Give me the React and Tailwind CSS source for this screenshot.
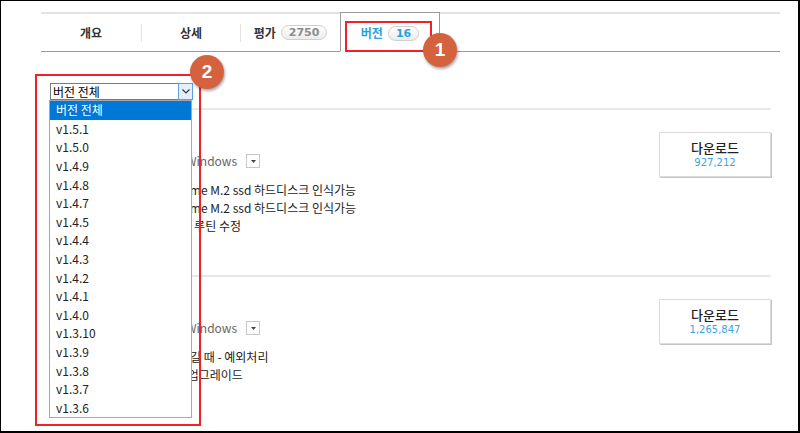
import React from 'react';

const versions = [
  'v1.5.1', 'v1.5.0', 'v1.4.9', 'v1.4.8', 'v1.4.7', 'v1.4.5', 'v1.4.4', 'v1.4.3',
  'v1.4.2', 'v1.4.1', 'v1.4.0', 'v1.3.10', 'v1.3.9', 'v1.3.8', 'v1.3.7', 'v1.3.6',
];

const releases = [
  {
    version: 'v1.5.1',
    downloads: '927,212',
    notes: [
      '· 부팅시 nvme M.2 ssd 하드디스크 인식가능',
      '· 설치시 nvme M.2 ssd 하드디스크 인식가능',
      '· 업데이트 - 루틴 수정',
    ],
  },
  {
    version: 'v1.5.0',
    downloads: '1,265,847',
    notes: ['· 폴더 경로 길 때 - 예외처리', '· zlib 엔진 업그레이드'],
  },
];

function Badge({ children, active }) {
  return (
    <span
      className={`ml-[5px] inline-flex h-[15px] items-center rounded-full border border-[#cfcfcf] bg-gradient-to-b from-white to-[#ececec] px-[7px] font-['DejaVu_Sans',sans-serif] text-[11px] font-bold leading-none ${
        active ? 'text-[#2a9fe0]' : 'text-[#8c8c8c]'
      }`}
    >
      {children}
    </span>
  );
}

function Tabs() {
  return (
    <div className="flex h-[40px] border-t-2 border-b border-t-[#e3e3e3] border-b-[#9a9a9a]">
      <div className="flex w-[100px] items-center justify-center text-[12px] font-bold text-[#333]">개요</div>
      <div className="w-px self-center h-[18px] bg-[#e2e2e2]" />
      <div className="flex w-[98px] items-center justify-center text-[12px] font-bold text-[#333]">상세</div>
      <div className="w-px self-center h-[18px] bg-[#e2e2e2]" />
      <div className="flex w-[99px] items-center justify-center text-[12px] font-bold text-[#333]">
        평가<Badge>2750</Badge>
      </div>
      <div className="-mt-[2px] -mb-px flex w-[100px] items-center justify-center border border-[#9a9a9a] border-b-white bg-white pt-[2px] text-[12px] font-bold text-[#2a9fe0]">
        버전<Badge active>16</Badge>
      </div>
      <div className="flex-1" />
    </div>
  );
}

function VersionSelect() {
  return (
    <div className="relative z-10 mt-[31px] w-[143px]">
      <div className="flex h-[17px] items-center border border-[#7a7a7a] bg-white">
        <span className="flex-1 pl-[2px] text-[12px] leading-none text-black">버전 전체</span>
        <span className="-my-px -mr-px flex h-[17px] w-[15px] items-center justify-center border border-[#5b9fe0] bg-[#e3effb]">
          <svg width="8" height="5" viewBox="0 0 8 5">
            <path d="M0.5 0.5 L4 4 L7.5 0.5" fill="none" stroke="#333" strokeWidth="1.1" />
          </svg>
        </span>
      </div>
      <ul className="absolute left-[-1px] top-full w-[143px] border border-[#a8a8a8] bg-white text-[12px]">
        <li className="flex h-[18.6px] items-center bg-[#0078d7] pl-[6px] text-white">버전 전체</li>
        {versions.map((v) => (
          <li key={v} className="flex h-[18.6px] items-center pl-[6px] text-[#222]">
            {v}
          </li>
        ))}
      </ul>
    </div>
  );
}

function Release({ release }) {
  return (
    <div className="flex h-[167px] justify-between border-t-2 border-[#e8e8e8]">
      <div className="pl-[81px] pt-[14px] text-[12px]">
        <div className="h-[20px] text-[14px] font-bold leading-[20px] text-[#222]">{release.version}</div>
        <div className="mt-[9px] flex h-[16px] items-center">
          <span className="w-[55px] text-[#888]">운영체제</span>
          <span className="text-[#666]">Windows</span>
          <span className="ml-[9px] flex h-[14px] w-[14px] items-center justify-center border border-[#c8c8c8] bg-white">
            <svg width="5" height="3" viewBox="0 0 5 3">
              <path d="M0 0 H5 L2.5 3 Z" fill="#444" />
            </svg>
          </span>
        </div>
        <ul className="mt-[12px] leading-[18px] text-[#222]">
          {release.notes.map((n) => (
            <li key={n} className="whitespace-nowrap">{n}</li>
          ))}
        </ul>
      </div>
      <div className="mt-[22px] flex h-[45px] w-[112px] flex-col items-center justify-center border border-[#dcdcdc] shadow-[1px_1px_0_#c4c4c4]">
        <span className="text-[13px] font-medium leading-[16px] text-[#222]">다운로드</span>
        <span className="font-['DejaVu_Sans',sans-serif] text-[10px] leading-[14px] text-[#3ba2e6]">
          {release.downloads}
        </span>
      </div>
    </div>
  );
}

function Marker({ n, className }) {
  return (
    <div
      className={`absolute z-30 flex h-[34px] w-[34px] items-center justify-center rounded-full bg-[#d5623f] font-['Liberation_Sans',sans-serif] text-[19px] font-bold text-white shadow-[1px_2px_3px_rgba(0,0,0,0.35)] ${className}`}
    >
      {n}
    </div>
  );
}

export default function App() {
  return (
    <div className="relative h-[433px] w-[800px] overflow-hidden border-t border-l border-r-2 border-b-2 border-black bg-white font-['Noto_Sans_CJK_KR',sans-serif]">
      <div className="pl-[40px] pr-[18px] pt-[11px]">
        <Tabs />
        <div className="mx-[9px]">
          <VersionSelect />
          <div className="mt-[8px]">
            {releases.map((r) => (
              <Release key={r.version} release={r} />
            ))}
          </div>
        </div>
      </div>

      {/* annotation boxes */}
      <div className="absolute left-[344px] top-[20px] z-20 h-[31px] w-[87px] border-2 border-[#ee2228]" />
      <div className="absolute left-[34px] top-[73px] z-20 h-[352px] w-[166px] border-2 border-[#ee2228]" />
      <Marker n="1" className="left-[422px] top-[32px]" />
      <Marker n="2" className="left-[189px] top-[54px]" />
    </div>
  );
}
